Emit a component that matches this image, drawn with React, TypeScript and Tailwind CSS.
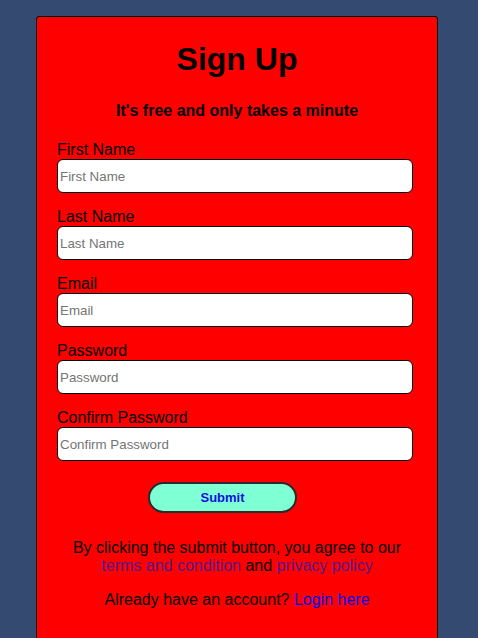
export default function App() {
  const fields = ["First Name", "Last Name", "Email", "Password", "Confirm Password"];
  return (
    <div className="w-[478px] h-[638px] overflow-hidden bg-[#354a70] pt-[16px]" style={{ fontFamily: '"Liberation Sans", Arial, sans-serif' }}>
      <div className="ml-[36px] w-[402px] h-[640px] bg-[#ff0000] border border-black rounded-[3px] pt-[24px]">
        <h1 className="text-[32px] leading-[37px] font-bold text-black text-center">Sign Up</h1>
        <p className="mt-[24px] text-[16px] leading-[18px] font-bold text-black text-center">It's free and only takes a minute</p>
        <div className="mt-[21px] pl-[20px] flex flex-col gap-[15px]">
          {fields.map((f) => (
            <div key={f} className="flex flex-col">
              <label className="text-[16px] leading-[18px] text-black">{f}</label>
              <input
                type={f.includes("Password") ? "password" : "text"}
                placeholder={f}
                className="w-[356px] h-[34px] bg-white border border-black rounded-[6px] px-[2px] text-[13.33px] text-black placeholder:text-[#757575] outline-none"
                style={{ fontFamily: '"Liberation Sans", Arial, sans-serif' }}
              />
            </div>
          ))}
        </div>
        <div className="mt-[21px] pl-[111px] flex">
          <button className="w-[149px] h-[31px] rounded-full bg-[#7fffd4] border-2 border-[#2a2a2a] text-[13px] font-bold text-[#1010e0]" style={{ fontFamily: '"Liberation Sans", Arial, sans-serif' }}>
            Submit
          </button>
        </div>
        <p className="mt-[26px] text-[16px] leading-[18px] text-black text-center px-[4px]">
          By clicking the submit button, you agree to our
          <br />
          <a className="text-[#551a8b]">terms and condition</a> and <a className="text-[#551a8b]">privacy policy</a>
        </p>
        <p className="mt-[16px] text-[16px] leading-[18px] text-black text-center">
          Already have an account? <a className="text-[#0000ee]">Login here</a>
        </p>
      </div>
    </div>
  );
}
